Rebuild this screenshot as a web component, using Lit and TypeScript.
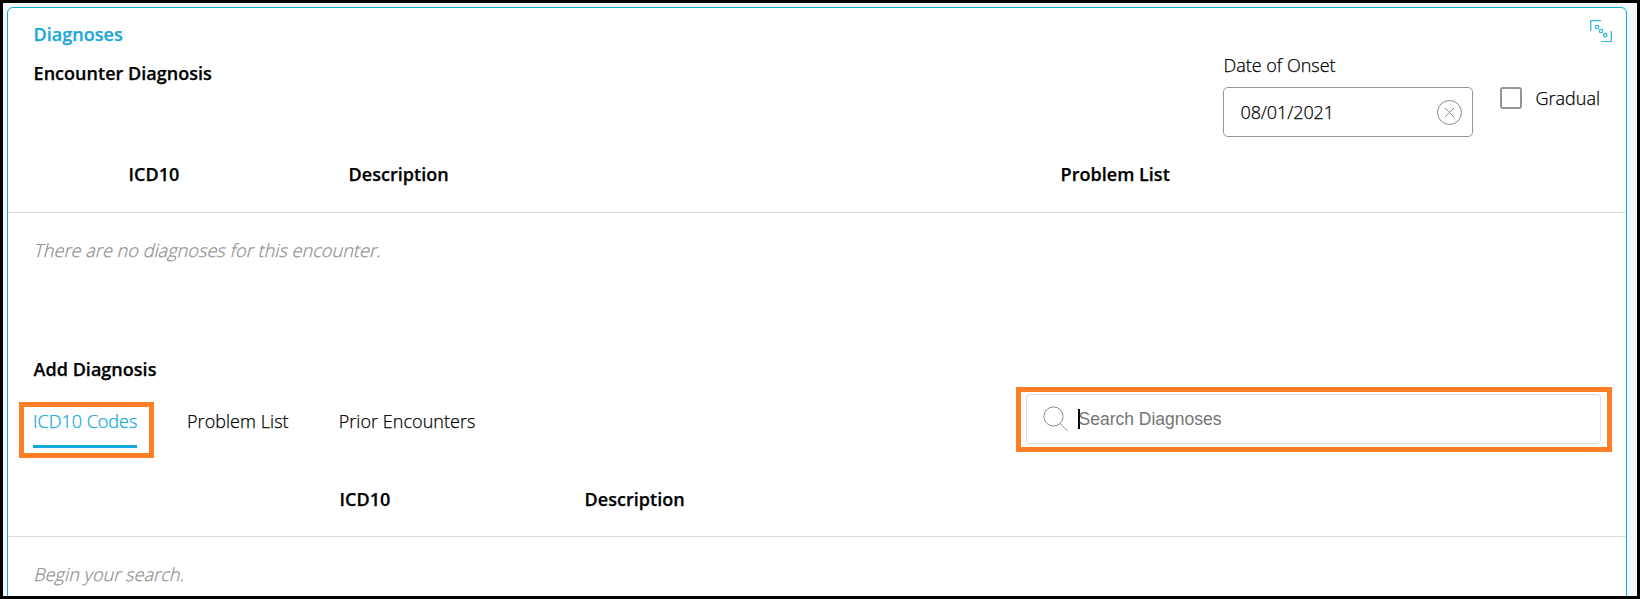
import { LitElement, html, css } from "lit";
import { customElement } from "lit/decorators.js";

@customElement("app-root")
export class AppRoot extends LitElement {
  static styles = css`
    :host {
      display: block;
      box-sizing: border-box;
      width: 1640px;
      height: 599px;
      overflow: hidden;
      border: 3px solid #000;
      background: #f3f8fc;
      padding: 4px 10px 0 4px;
      font: 300 18px/24px "Open Sans", "Noto Sans", sans-serif;
      -webkit-text-stroke: 0.25px;
      color: #000;
    }
    * { box-sizing: border-box; }
    .card {
      height: 640px;
      background: #fff;
      border: 1px solid #17a6d9;
      border-radius: 6px;
      padding-top: 14px;
    }
    .head {
      display: flex;
      justify-content: space-between;
      height: 131px;
      padding: 0 25px;
    }
    .title, .strong, .cols { font-weight: 600; letter-spacing: 0.02px; }
    .title, .strong { padding-left: 0.6px; }
    .title { color: #1ba7da; margin-bottom: 15px; }
    .right { display: flex; flex-direction: column; }
    .expand { align-self: flex-end; margin: -2px -11px 0 0; width: 22px; height: 22px; flex: none; }
    .fields { display: flex; margin-top: 11px; }
    .onset { width: 250px; }
    .label { display: block; margin-bottom: 10px; }
    .date {
      display: flex;
      align-items: center;
      justify-content: space-between;
      height: 50px;
      border: 1px solid #959595;
      border-radius: 5px;
      padding: 0 10px 0 16px;
    }
    .value { letter-spacing: -0.1px; }
    .gradual { display: flex; gap: 13px; margin: 33px 1px 0 27px; }
    .box { width: 22px; height: 22px; margin-top: 1px; border: 2px solid #959595; border-radius: 3px; }
    .cols { display: grid; align-items: start; border-bottom: 1px solid #dcdcdc; }
    .current { grid-template-columns: 220px 712px 1fr; height: 60px; padding: 9px 0 0 120.6px; }
    .found { grid-template-columns: 245px 1fr; height: 79px; padding: 29px 0 0 331.6px; }
    .empty { padding: 25px 27px 0; color: #8f8f8f; }
    .empty span { display: inline-block; transform: skewX(-14deg); letter-spacing: 0.07px; }
    .add { padding: 96px 25px 0; }
    .add .strong { margin-top: -1px; }
    .bar { display: flex; justify-content: space-between; height: 64px; margin-top: 13px; }
    .tabs { display: flex; gap: 50px; padding-top: 15px; }
    .tab { position: relative; height: 39px; white-space: nowrap; letter-spacing: 0.05px; }
    .tab.active { width: 104px; color: #12a8dc; border-bottom: 3px solid #12a8dc; letter-spacing: 0; }
    .tab.active::after {
      content: "";
      position: absolute;
      inset: -7px -17px -13px -14px;
      border: 5px solid #ff7f27;
    }
    .search {
      position: relative;
      display: flex;
      align-items: center;
      width: 575px;
      height: 50px;
      border: 1px solid #dcdcdc;
      border-radius: 4px;
      padding-left: 16px;
      font-family: "Liberation Sans", Arial, sans-serif;
      font-size: 17.5px;
      font-weight: 400;
      color: #757575;
      -webkit-text-stroke: 0;
    }
    .search::after {
      content: "";
      position: absolute;
      inset: -8px -12px -9px -11px;
      border: 5px solid #ff7f27;
    }
    .caret { width: 2px; height: 20px; background: #000; margin: 0 -1.5px 0 9px; }
  `;

  render() {
    return html`
      <section class="card">
        <div class="head">
          <div>
            <div class="title">Diagnoses</div>
            <div class="strong">Encounter Diagnosis</div>
          </div>
          <div class="right">
            <svg class="expand" viewBox="0 0 22 22" fill="none" stroke="#35b5de" stroke-width="1.3">
              <path d="M.7 11V.7H11M21.3 11v10.6H11" />
              <circle cx="7" cy="7" r="1.7" /><circle cx="11" cy="11" r="1.7" /><circle cx="15.2" cy="15.2" r="1.7" />
            </svg>
            <div class="fields">
              <div class="onset">
                <span class="label">Date of Onset</span>
                <div class="date">
                  <span class="value">08/01/2021</span>
                  <svg width="26" height="26" viewBox="0 0 26 26" fill="none" stroke="#8c8c8c">
                    <circle cx="13.5" cy="13.5" r="12" /><path d="M8.9 8.9l9.2 9.2m0-9.2l-9.2 9.2" />
                  </svg>
                </div>
              </div>
              <div class="gradual"><span class="box"></span><span>Gradual</span></div>
            </div>
          </div>
        </div>
        <div class="cols current"><span>ICD10</span><span>Description</span><span>Problem List</span></div>
        <div class="empty"><span>There are no diagnoses for this encounter.</span></div>
        <div class="add">
          <div class="strong">Add Diagnosis</div>
          <div class="bar">
            <nav class="tabs">
              <span class="tab active">ICD10 Codes</span>
              <span class="tab">Problem List</span>
              <span class="tab">Prior Encounters</span>
            </nav>
            <div class="search">
              <svg width="26" height="26" viewBox="0 0 26 26" fill="none" stroke="#8c8c8c">
                <circle cx="10.5" cy="10.5" r="9.6" /><path d="M17.3 17.6l7.3 7.6" />
              </svg>
              <span class="caret"></span><span>Search Diagnoses</span>
            </div>
          </div>
        </div>
        <div class="cols found"><span>ICD10</span><span>Description</span></div>
        <div class="empty"><span>Begin your search.</span></div>
      </section>
    `;
  }
}
